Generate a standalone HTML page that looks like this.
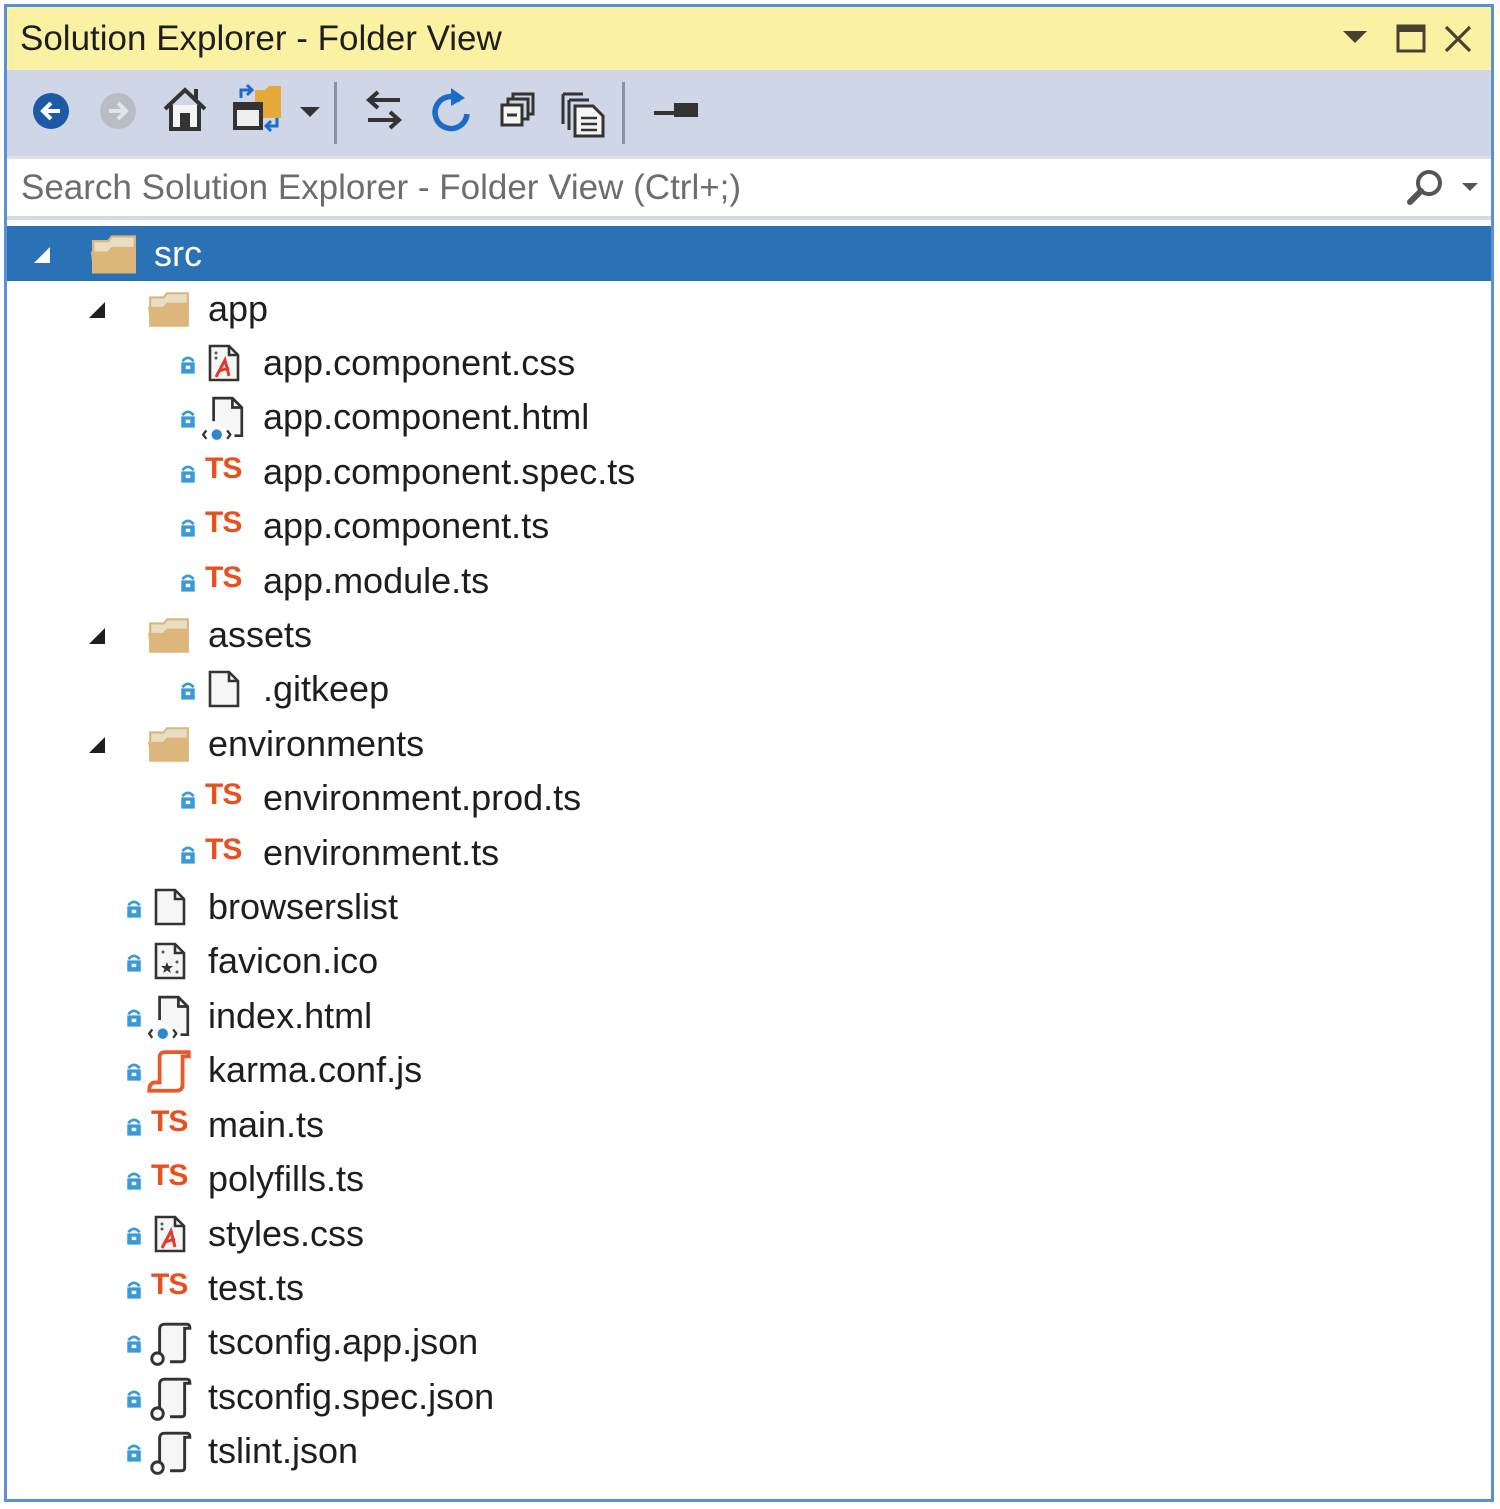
<!DOCTYPE html>
<html><head><meta charset="utf-8">
<style>
*{margin:0;padding:0;box-sizing:border-box}
body{width:1500px;height:1509px;background:#fff;position:relative;overflow:hidden;font-family:"Liberation Sans",sans-serif}
.frame{position:absolute;left:4px;top:4px;width:1490px;height:1498px;border:3px solid #5b8fd6}
.title{position:absolute;left:7px;top:7px;width:1484px;height:63px;background:#fbf1a3}
.title span{position:absolute;left:13px;top:12px;font-size:35px;color:#1e1e1e}
.tb{position:absolute;left:7px;top:70px;width:1484px;height:86px;background:#cfd6e5}
.search{position:absolute;left:7px;top:156px;width:1484px;height:64px;background:#fff;border-top:3px solid #dde2ec;border-bottom:4px solid #d5d9e3}
.search span{position:absolute;left:14px;top:9px;font-size:35px;color:#6d6d6d}
.sel{position:absolute;left:7px;top:226px;width:1484px;height:55px;background:#2a72b5}
.row{position:absolute;height:54px;line-height:54px;font-size:36px;color:#1e1e1e;white-space:nowrap}
.row .t{position:absolute;top:0}
svg{position:absolute}
.ts{position:absolute;font-weight:bold;color:#e8501e;font-size:30px;line-height:54px;top:-3px;letter-spacing:-1px}
</style></head><body>
<svg width="0" height="0" style="position:absolute">
<defs>
<symbol id="lock" viewBox="0 0 16 18"><path d="M3 7 Q8 1 13 7" stroke="#3a9ad9" stroke-width="2.4" fill="none"/><rect x="2" y="8" width="12" height="10" fill="#3a9ad9"/><rect x="6" y="11" width="4" height="3" fill="#fff"/></symbol>
<symbol id="folder" viewBox="0 0 44 38"><path d="M4 10 L4 34 L40 34 L40 3 L20 3 L17 7 L4 7Z" fill="#e9ddc3" stroke="#d8b57a" stroke-width="2"/><path d="M2 16 L16 16 L20 12 L40 12 L40 34 L4 34Z" fill="#dcb67a"/></symbol>
<symbol id="file" viewBox="0 0 34 38"><path d="M3 2 L22 2 L31 11 L31 36 L3 36Z" fill="#f6f6f6" stroke="#333" stroke-width="2.6"/><path d="M22 2 L22 11 L31 11" fill="none" stroke="#333" stroke-width="2.6"/></symbol>
<symbol id="css" viewBox="0 0 34 38"><path d="M3 2 L22 2 L31 11 L31 36 L3 36Z" fill="#f6f6f6" stroke="#333" stroke-width="2.6"/><path d="M22 2 L22 11 L31 11" fill="none" stroke="#333" stroke-width="2.6"/><path d="M9 33 L18 16 L22 32 M12 27 L22 24" stroke="#e03a2a" stroke-width="3" fill="none"/><circle cx="9" cy="9" r="1.5" fill="#555"/><circle cx="9" cy="14" r="1.5" fill="#555"/></symbol>
<symbol id="ico" viewBox="0 0 34 38"><path d="M3 2 L22 2 L31 11 L31 36 L3 36Z" fill="#f6f6f6" stroke="#333" stroke-width="2.6"/><path d="M22 2 L22 11 L31 11" fill="none" stroke="#333" stroke-width="2.6"/><path d="M14 20 L15.5 24 L20 24 L16.5 27 L18 31 L14 28.5 L10 31 L11.5 27 L8 24 L12.5 24Z" fill="#333"/><circle cx="10" cy="10" r="1.5" fill="#555"/><circle cx="24" cy="20" r="1.5" fill="#555"/><circle cx="24" cy="30" r="1.5" fill="#555"/></symbol>
<symbol id="html" viewBox="0 0 46 44"><path d="M14 24 L14 2 L32 2 L41 11 L41 38 L34 38" fill="#f6f6f6" stroke="#333" stroke-width="2.6"/><path d="M32 2 L32 11 L41 11" fill="none" stroke="#333" stroke-width="2.6"/><circle cx="17" cy="37" r="5" fill="#2e86d1"/><path d="M7 33 L4 37 L7 41 M27 33 L30 37 L27 41" stroke="#333" stroke-width="2.2" fill="none"/></symbol>
<symbol id="json" viewBox="0 0 46 44"><path d="M14 30 L14 8 Q14 3 19 3 L40 3 Q43 3 43 7 L38 7 L38 36 Q38 39 35 39 L24 39" fill="#f6f6f6" stroke="#333" stroke-width="2.8"/><circle cx="12" cy="36" r="5.5" fill="#fff" stroke="#333" stroke-width="2.8"/></symbol>
<symbol id="karma" viewBox="0 0 46 44"><path d="M14 32 L14 8 Q14 3 19 3 L42 3 L42 7 L36 7 L36 34 Q36 40 30 40 L4 40 Q4 32 10 32Z" fill="#fff" stroke="#ea5a26" stroke-width="3.6"/></symbol>
</defs></svg>

<div class="frame"></div>
<div class="title"><span>Solution Explorer - Folder View</span>
<svg style="left:1336px;top:24px" width="24" height="14"><path d="M0 0 L24 0 L12 12Z" fill="#4a4030"/></svg>
<svg style="left:1389px;top:17px" width="30" height="30"><rect x="2" y="2" width="26" height="25" fill="none" stroke="#4a4030" stroke-width="3"/><rect x="2" y="2" width="26" height="6" fill="#4a4030"/></svg>
<svg style="left:1436px;top:17px" width="30" height="30"><path d="M3 3 L27 27 M27 3 L3 27" stroke="#4a4030" stroke-width="3.2"/></svg>
</div>
<div class="tb">
<svg style="left:24px;top:20px" width="40" height="40"><circle cx="20" cy="21" r="18" fill="#1c5aa6"/><path d="M29 21 L13 21 M20 13 L12 21 L20 29" stroke="#fff" stroke-width="4" fill="none"/></svg>
<svg style="left:91px;top:20px" width="40" height="40"><circle cx="20" cy="21" r="18" fill="#b7bcc5"/><path d="M11 21 L27 21 M20 13 L28 21 L20 29" stroke="#e2e5ea" stroke-width="4" fill="none"/></svg>
<svg style="left:154px;top:15px" width="48" height="48"><path d="M4 24 L24 5 L44 24" stroke="#333" stroke-width="4" fill="none"/><path d="M10 20 L10 44 L38 44 L38 20" stroke="#333" stroke-width="4" fill="#f5f5f5"/><rect x="19" y="28" width="10" height="16" fill="#333"/><rect x="33" y="4" width="4" height="10" fill="#333"/></svg>
<svg style="left:222px;top:12px" width="60" height="52"><path d="M26 8 L26 36 L52 36 L52 4 L40 4 L36 8Z" fill="#e5a93a"/><rect x="6" y="22" width="26" height="24" fill="#eee" stroke="#333" stroke-width="4"/><rect x="6" y="22" width="26" height="6" fill="#333"/><path d="M12 16 L12 8 L22 8 M18 3 L23 8 L18 13" stroke="#1c6cc7" stroke-width="3" fill="none"/><path d="M48 36 L48 44 L38 44 M42 39 L37 44 L42 49" stroke="#1c6cc7" stroke-width="3" fill="none"/></svg>
<svg style="left:293px;top:37px" width="20" height="12"><path d="M0 0 L20 0 L10 10Z" fill="#333"/></svg>
<div style="position:absolute;left:327px;top:12px;width:3px;height:62px;background:#8a93a3"></div>
<svg style="left:355px;top:18px" width="44" height="46"><path d="M38 12 L8 12 M16 4 L7 12 L16 20" stroke="#333" stroke-width="4" fill="none"/><path d="M6 32 L36 32 M28 24 L37 32 L28 40" stroke="#333" stroke-width="4" fill="none"/></svg>
<svg style="left:420px;top:14px" width="48" height="52"><path d="M34 16 A16 16 0 1 0 40 30" stroke="#1c6cc7" stroke-width="5.5" fill="none"/><path d="M24 4 L38 14 L24 22Z" fill="#1c6cc7"/></svg>
<svg style="left:490px;top:20px" width="44" height="44"><rect x="16" y="4" width="20" height="20" fill="none" stroke="#333" stroke-width="3"/><rect x="11" y="9" width="20" height="20" fill="#cfd6e5" stroke="#333" stroke-width="3"/><rect x="5" y="15" width="20" height="20" fill="#f5f5f5" stroke="#333" stroke-width="3"/><path d="M10 25 L20 25" stroke="#333" stroke-width="3"/></svg>
<svg style="left:552px;top:18px" width="52" height="50"><path d="M4 6 L4 36 M4 6 L24 6" stroke="#333" stroke-width="3" fill="none"/><path d="M10 12 L10 42 M10 12 L30 12" stroke="#333" stroke-width="3" fill="none"/><path d="M16 18 L34 18 L44 28 L44 48 L16 48Z" fill="#f5f5f5" stroke="#333" stroke-width="3"/><path d="M22 30 L38 30 M22 36 L38 36 M22 42 L38 42" stroke="#333" stroke-width="2.5"/></svg>
<div style="position:absolute;left:615px;top:12px;width:3px;height:62px;background:#8a93a3"></div>
<svg style="left:645px;top:30px" width="50" height="24"><rect x="2" y="11" width="26" height="4" fill="#333"/><rect x="22" y="3" width="24" height="14" fill="#333"/></svg>
</div>
<div class="search"><span>Search Solution Explorer - Folder View (Ctrl+;)</span>
<svg style="left:1398px;top:8px" width="40" height="42"><circle cx="24" cy="16" r="11" fill="none" stroke="#555" stroke-width="4"/><path d="M16 24 L5 35" stroke="#555" stroke-width="6" stroke-linecap="round"/></svg>
<svg style="left:1455px;top:24px" width="16" height="10"><path d="M0 0 L16 0 L8 8Z" fill="#555"/></svg>
</div>
<div class="sel"></div>

<div class="row" style="left:0;top:227px;width:1490px;color:#fff">
<svg style="left:32px;top:18px" width="20" height="20"><path d="M18 2 L18 18 L2 18Z" fill="#fff"/></svg>
<svg style="left:88px;top:6px" width="52" height="44"><use href="#folder"/></svg>
<span class="t" style="left:154px">src</span></div>

<div class="row" style="left:0;top:282px"><svg style="left:87px;top:18px" width="20" height="20"><path d="M18 2 L18 18 L2 18Z" fill="#1e1e1e"/></svg><svg style="left:146px;top:8px" width="46" height="40"><use href="#folder"/></svg><span class="t" style="left:208px">app</span></div>

<div class="row" style="left:0;top:336px"><svg style="left:179px;top:17px" width="18" height="21"><use href="#lock"/></svg><svg style="left:207px;top:8px" width="34" height="38"><use href="#css"/></svg><span class="t" style="left:263px">app.component.css</span></div>
<div class="row" style="left:0;top:390px"><svg style="left:179px;top:17px" width="18" height="21"><use href="#lock"/></svg><svg style="left:199px;top:6px" width="48" height="46"><use href="#html"/></svg><span class="t" style="left:263px">app.component.html</span></div>
<div class="row" style="left:0;top:445px"><svg style="left:179px;top:17px" width="18" height="21"><use href="#lock"/></svg><span class="ts" style="left:205px">TS</span><span class="t" style="left:263px">app.component.spec.ts</span></div>
<div class="row" style="left:0;top:499px"><svg style="left:179px;top:17px" width="18" height="21"><use href="#lock"/></svg><span class="ts" style="left:205px">TS</span><span class="t" style="left:263px">app.component.ts</span></div>
<div class="row" style="left:0;top:554px"><svg style="left:179px;top:17px" width="18" height="21"><use href="#lock"/></svg><span class="ts" style="left:205px">TS</span><span class="t" style="left:263px">app.module.ts</span></div>

<div class="row" style="left:0;top:608px"><svg style="left:87px;top:18px" width="20" height="20"><path d="M18 2 L18 18 L2 18Z" fill="#1e1e1e"/></svg><svg style="left:146px;top:8px" width="46" height="40"><use href="#folder"/></svg><span class="t" style="left:208px">assets</span></div>
<div class="row" style="left:0;top:662px"><svg style="left:179px;top:17px" width="18" height="21"><use href="#lock"/></svg><svg style="left:207px;top:8px" width="34" height="38"><use href="#file"/></svg><span class="t" style="left:263px">.gitkeep</span></div>

<div class="row" style="left:0;top:717px"><svg style="left:87px;top:18px" width="20" height="20"><path d="M18 2 L18 18 L2 18Z" fill="#1e1e1e"/></svg><svg style="left:146px;top:8px" width="46" height="40"><use href="#folder"/></svg><span class="t" style="left:208px">environments</span></div>
<div class="row" style="left:0;top:771px"><svg style="left:179px;top:17px" width="18" height="21"><use href="#lock"/></svg><span class="ts" style="left:205px">TS</span><span class="t" style="left:263px">environment.prod.ts</span></div>
<div class="row" style="left:0;top:826px"><svg style="left:179px;top:17px" width="18" height="21"><use href="#lock"/></svg><span class="ts" style="left:205px">TS</span><span class="t" style="left:263px">environment.ts</span></div>

<div class="row" style="left:0;top:880px"><svg style="left:125px;top:17px" width="18" height="21"><use href="#lock"/></svg><svg style="left:153px;top:8px" width="34" height="38"><use href="#file"/></svg><span class="t" style="left:208px">browserslist</span></div>
<div class="row" style="left:0;top:934px"><svg style="left:125px;top:17px" width="18" height="21"><use href="#lock"/></svg><svg style="left:153px;top:8px" width="34" height="38"><use href="#ico"/></svg><span class="t" style="left:208px">favicon.ico</span></div>
<div class="row" style="left:0;top:989px"><svg style="left:125px;top:17px" width="18" height="21"><use href="#lock"/></svg><svg style="left:145px;top:6px" width="48" height="46"><use href="#html"/></svg><span class="t" style="left:208px">index.html</span></div>
<div class="row" style="left:0;top:1043px"><svg style="left:125px;top:17px" width="18" height="21"><use href="#lock"/></svg><svg style="left:145px;top:6px" width="48" height="46"><use href="#karma"/></svg><span class="t" style="left:208px">karma.conf.js</span></div>
<div class="row" style="left:0;top:1098px"><svg style="left:125px;top:17px" width="18" height="21"><use href="#lock"/></svg><span class="ts" style="left:151px">TS</span><span class="t" style="left:208px">main.ts</span></div>
<div class="row" style="left:0;top:1152px"><svg style="left:125px;top:17px" width="18" height="21"><use href="#lock"/></svg><span class="ts" style="left:151px">TS</span><span class="t" style="left:208px">polyfills.ts</span></div>
<div class="row" style="left:0;top:1207px"><svg style="left:125px;top:17px" width="18" height="21"><use href="#lock"/></svg><svg style="left:153px;top:8px" width="34" height="38"><use href="#css"/></svg><span class="t" style="left:208px">styles.css</span></div>
<div class="row" style="left:0;top:1261px"><svg style="left:125px;top:17px" width="18" height="21"><use href="#lock"/></svg><span class="ts" style="left:151px">TS</span><span class="t" style="left:208px">test.ts</span></div>
<div class="row" style="left:0;top:1315px"><svg style="left:125px;top:17px" width="18" height="21"><use href="#lock"/></svg><svg style="left:145px;top:6px" width="48" height="46"><use href="#json"/></svg><span class="t" style="left:208px">tsconfig.app.json</span></div>
<div class="row" style="left:0;top:1370px"><svg style="left:125px;top:17px" width="18" height="21"><use href="#lock"/></svg><svg style="left:145px;top:6px" width="48" height="46"><use href="#json"/></svg><span class="t" style="left:208px">tsconfig.spec.json</span></div>
<div class="row" style="left:0;top:1424px"><svg style="left:125px;top:17px" width="18" height="21"><use href="#lock"/></svg><svg style="left:145px;top:6px" width="48" height="46"><use href="#json"/></svg><span class="t" style="left:208px">tslint.json</span></div>
</body></html>
